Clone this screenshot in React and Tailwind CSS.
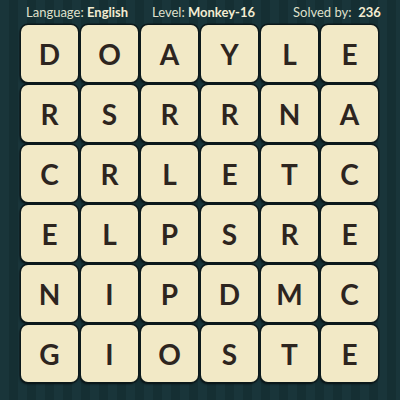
import React from 'react';

const rows = [
    ['D', 'O', 'A', 'Y', 'L', 'E'],
    ['R', 'S', 'R', 'R', 'N', 'A'],
    ['C', 'R', 'L', 'E', 'T', 'C'],
    ['E', 'L', 'P', 'S', 'R', 'E'],
    ['N', 'I', 'P', 'D', 'M', 'C'],
    ['G', 'I', 'O', 'S', 'T', 'E'],
];

export default function App() {
    return (
        <div
            className="w-[400px] h-[400px] overflow-hidden bg-[repeating-linear-gradient(90deg,#19353a_0px,#19353a_9px,#152f33_9px,#152f33_18px)]"
            style={{fontFamily: 'Lato, "Noto Sans", sans-serif'}}
        >
            {/* Cabecera */}
            <div className="h-[25px] flex items-center pl-[26px] text-[13px] text-[#dfe0cc] leading-none">
                <span className="w-[126px]">Language: <b className="font-bold text-[#f2ecd2]">English</b></span>
                <span className="w-[141px]">Level: <b className="font-bold text-[#f2ecd2]">Monkey-16</b></span>
                <span>Solved by: &nbsp;<b className="font-bold text-[#f2ecd2]">236</b></span>
            </div>

            {/* Tablero */}
            <div className="ml-[21px] w-[357px] grid grid-cols-6 gap-[3px]">
                {rows.flat().map((letter, i) => (
                    <div
                        key={i}
                        className="h-[57px] rounded-[7px] bg-[#f2e9c6] flex items-center justify-center text-[28px] font-bold text-[#2d251f] shadow-[0_0_0_1.5px_#0c191b,-1px_2px_2px_#081214]"
                    >
                        {letter}
                    </div>
                ))}
            </div>
        </div>
    );
}
